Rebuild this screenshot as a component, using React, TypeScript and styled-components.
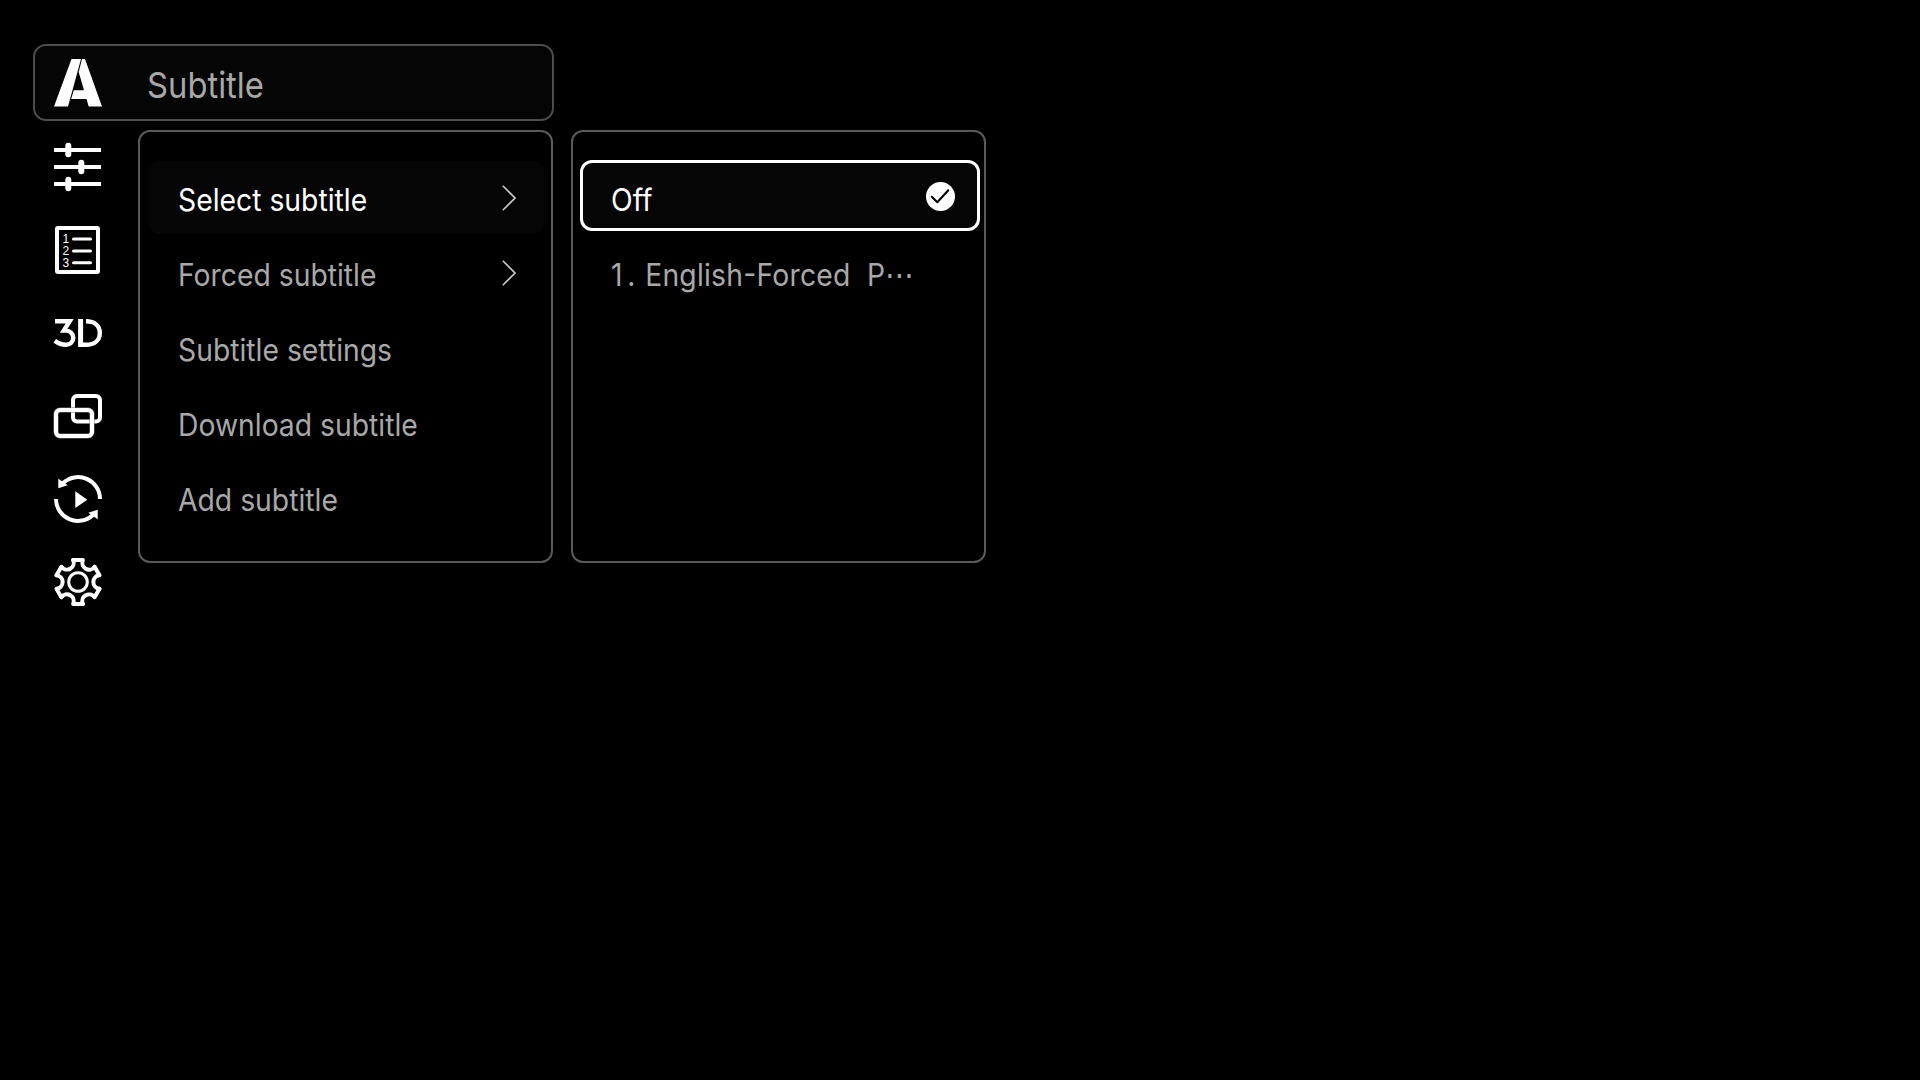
import React from "react";
import styled, { createGlobalStyle } from "styled-components";

const GlobalStyle = createGlobalStyle`
  * {
    box-sizing: border-box;
  }
  body {
    margin: 0;
    background-color: #000;
    overflow: hidden;
  }
`;

const Screen = styled.div`
  width: 100vw;
  height: 100vh;
  padding: 44px 0 0 33px;
  background-color: #000;
  color: #a8a8a8;
  font-family: Inter, "Liberation Sans", sans-serif;
`;

const Header = styled.header`
  display: flex;
  align-items: center;
  width: 521px;
  height: 77px;
  padding-left: 19px;
  border: 2px solid #4d4d4d;
  border-radius: 13px;
  background-color: #050505;
`;

const Title = styled.h1`
  margin: 5px 0 0 45px;
  font-size: 36px;
  font-weight: 400;
  line-height: 44px;
  transform: scaleX(0.91);
  transform-origin: left center;
`;

const Body = styled.div`
  display: flex;
  align-items: flex-start;
  margin-top: 9px;
`;

const Rail = styled.nav`
  display: flex;
  flex-direction: column;
  gap: 35px;
  width: 105px;
  padding: 13px 0 0 21px;
`;

const Icon = styled.svg`
  display: block;
  flex: none;
  width: 48px;
  height: 48px;
  fill: none;
  stroke: #fff;
  overflow: visible;
`;

const Panel = styled.section`
  display: flex;
  flex-direction: column;
  gap: 2px;
  width: 415px;
  height: 433px;
  margin-right: 18px;
  padding: 29px 6px 0;
  border: 2px solid #5a5a5a;
  border-radius: 12px;
`;

const Row = styled.div<{ $active?: boolean; $focused?: boolean }>`
  display: flex;
  align-items: center;
  justify-content: space-between;
  height: ${(p) => (p.$focused ? 71 : 73)}px;
  margin: ${(p) => (p.$focused ? "-1px -2px 3px 1px" : "0 0 0 2px")};
  padding: ${(p) => (p.$focused ? "0 22px 0 28px" : "0 29px 0 30px")};
  border: ${(p) => (p.$focused ? "3px solid #fff" : "none")};
  border-radius: 12px;
  background-color: ${(p) => (p.$active || p.$focused ? "#050505" : "transparent")};
  color: ${(p) => (p.$active || p.$focused ? "#fff" : "inherit")};
`;

const Label = styled.span<{ $focused?: boolean }>`
  padding-top: ${(p) => (p.$focused ? 8 : 4)}px;
  font-size: 30.5px;
  line-height: 36px;
  white-space: pre;
  transform: scaleX(0.928);
  transform-origin: left center;
`;

const Index = styled.span`
  letter-spacing: 5px;
`;

const TrackName = styled.span`
  margin-left: 2px;
  letter-spacing: 0.25px;
  font-feature-settings: "case";
`;

const Arrow = styled.svg`
  width: 14px;
  height: 26px;
  fill: none;
  stroke: #c8c8c8;
  stroke-width: 1.6;
`;

const Check = styled.svg`
  width: 29px;
  height: 29px;
  margin-top: 2px;
`;

const Digit = styled.text`
  fill: #fff;
  stroke: none;
  font-family: "Liberation Sans", sans-serif;
  font-size: 12px;
`;

const LogoIcon = () => (
  <Icon viewBox="0 0 48 48">
    <g fill="#fff" stroke="none">
      <path d="M17.5 0H27L14 47.5H0z" />
      <path d="M28 0h3l17 47.5H34.7L32.5 40H17.2l2.5-8.7H30L24.7 13z" />
    </g>
  </Icon>
);

const SlidersIcon = () => (
  <Icon viewBox="0 0 48 48">
    <path strokeWidth="4" d="M0 7h47M0 24h47M0 41h47" />
    <path
      strokeWidth="6"
      strokeLinecap="round"
      d="M14.3 2.8v8.4M27.3 19.8v8.4M14.3 36.8v8.4"
    />
  </Icon>
);

const ListIcon = () => (
  <Icon viewBox="0 0 48 48">
    <rect x="3" y="2" width="41" height="44" rx="1" strokeWidth="4" />
    <path strokeWidth="3" strokeLinecap="round" d="M19.5 13h17M19.5 25h17M19.5 36.7h17" />
    <Digit x="8.5" y="17.3">1</Digit>
    <Digit x="8.5" y="29.3">2</Digit>
    <Digit x="8.5" y="41">3</Digit>
  </Icon>
);

const ThreeDIcon = () => (
  <Icon viewBox="0 0 48 48" strokeWidth="4.4">
    <path d="M1 12.2h14.7L9.8 21.6h2.4a7.1 7.1 0 0 1 0 14.2c-4.6 0-8-1.2-11.4-4" />
    <path strokeWidth="5" d="M26.6 10v28" />
    <path d="M32 12.2c8.5 0 13.8 4.6 13.8 11.8s-5.3 11.8-13.8 11.8h-5" />
  </Icon>
);

const WindowsIcon = () => (
  <Icon viewBox="0 0 48 48" strokeWidth="4">
    <rect x="19" y="4" width="27" height="25.5" rx="4" />
    <rect x="2" y="18" width="36" height="26" rx="4" stroke="#777" strokeWidth="5" />
    <rect x="2" y="18" width="36" height="26" rx="4" />
  </Icon>
);

const LoopIcon = () => (
  <Icon viewBox="0 0 48 48" strokeWidth="4">
    <path d="M46 24A22 22 0 0 0 9 8M2 24a22 22 0 0 0 37 16" />
    <path
      fill="#fff"
      stroke="none"
      d="M4.3 3.7v9.6l9.4-3zM43.7 44.3v-9.6l-9.4 3zM21.3 16.3v16.7l12-8.3z"
    />
  </Icon>
);

const GearIcon = () => (
  <Icon viewBox="-24 -24 48 48" strokeWidth="4" strokeLinecap="round" strokeLinejoin="round">
    {[0, 60, 120, 180, 240, 300].map((deg) => (
      <path
        key={deg}
        d="M-4.9-22H4.9A6.8 6.8 0 0 0 16.6-15.2"
        transform={`rotate(${deg})`}
      />
    ))}
    <circle r="9.3" strokeWidth="3" />
  </Icon>
);

const ChevronIcon = () => (
  <Arrow viewBox="0 0 14 26">
    <path d="M.8.8 13 13 .8 25.2" />
  </Arrow>
);

const CheckIcon = () => (
  <Check viewBox="0 0 29 29">
    <circle cx="14.5" cy="14.5" r="14.5" fill="#fff" />
    <path
      d="M5.8 14.8l5.5 5.5L22.3 8.3"
      fill="none"
      stroke="#000"
      strokeWidth="2"
      strokeLinecap="round"
      strokeLinejoin="round"
    />
  </Check>
);

const menu = [
  { label: "Select subtitle", hasMore: true },
  { label: "Forced subtitle", hasMore: true },
  { label: "Subtitle settings" },
  { label: "Download subtitle" },
  { label: "Add subtitle" },
];

const tracks = ["English-Forced  P⋯"];

export default function App() {
  const current = 0;

  return (
    <Screen>
      <GlobalStyle />
      <Header>
        <LogoIcon />
        <Title>Subtitle</Title>
      </Header>
      <Body>
        <Rail>
          <SlidersIcon />
          <ListIcon />
          <ThreeDIcon />
          <WindowsIcon />
          <LoopIcon />
          <GearIcon />
        </Rail>
        <Panel>
          {menu.map((item, i) => (
            <Row key={item.label} $active={i === current}>
              <Label>{item.label}</Label>
              {item.hasMore && <ChevronIcon />}
            </Row>
          ))}
        </Panel>
        <Panel>
          <Row $focused>
            <Label $focused>Off</Label>
            <CheckIcon />
          </Row>
          {tracks.map((track, i) => (
            <Row key={track}>
              <Label>
                <Index>{i + 1}</Index>
                {". "}
                <TrackName>{track}</TrackName>
              </Label>
            </Row>
          ))}
        </Panel>
      </Body>
    </Screen>
  );
}
